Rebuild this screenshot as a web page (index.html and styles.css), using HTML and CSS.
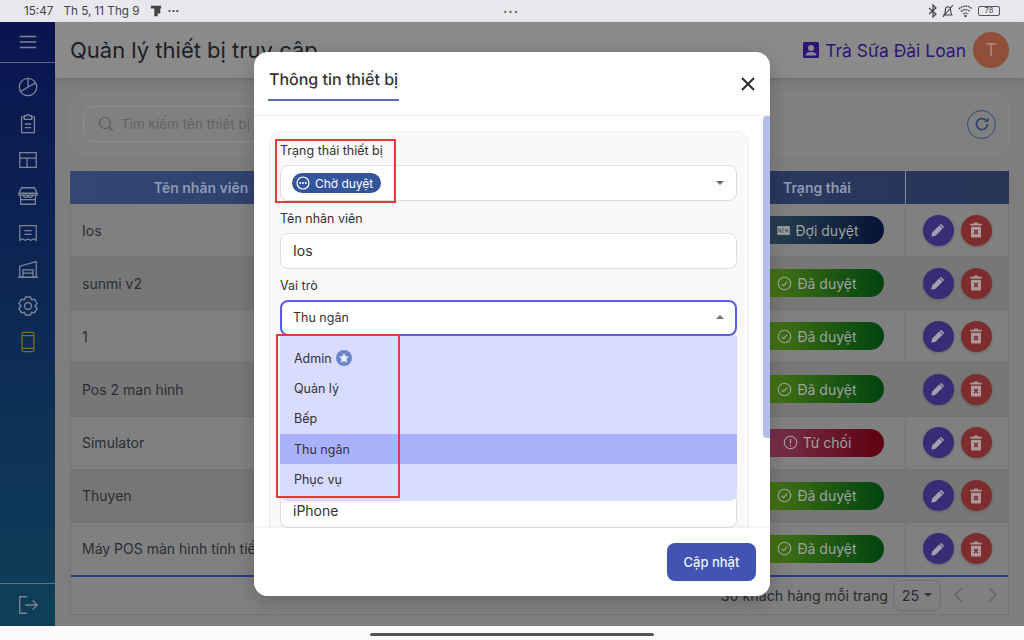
FILE: index.html
```html
<!DOCTYPE html>
<html lang="vi">
<head>
    <meta charset="UTF-8">
    <meta name="viewport" content="width=device-width, initial-scale=1.0">
    <title>Quản lý thiết bị truy cập</title>
    <link rel="stylesheet" href="styles.css">
</head>
<body>
    <svg class="sprite" aria-hidden="true">
        <symbol id="i_ok" viewBox="0 0 24 24"><circle cx="12" cy="12" r="10" fill="none" stroke="currentColor" stroke-width="1.8"/><path d="M7.5 12.5l3 3 6-6.5" fill="none" stroke="currentColor" stroke-width="1.8"/></symbol>
        <symbol id="i_no" viewBox="0 0 24 24"><circle cx="12" cy="12" r="10" fill="none" stroke="currentColor" stroke-width="1.8"/><path d="M12 6.5v7M12 16v2" fill="none" stroke="currentColor" stroke-width="2"/></symbol>
        <symbol id="i_new" viewBox="0 0 24 24"><path d="M2 5h20v14H2z" fill="currentColor"/><path d="M4.5 15V9l3 6V9M10 9v6M10 9h3M10 12h2.500M10 15h3M14.500 9l1.300 6 1.400-5 1.300 5 1.300-6" fill="none" stroke="#3b5468" stroke-width="1.100"/></symbol>
        <symbol id="i_edit" viewBox="0 0 24 24"><path d="M4 20l1-5L15.500 4.500l4 4L9 19z" fill="currentColor"/><path d="M13.800 6.200l4 4" stroke="#372c75" stroke-width="1.200"/></symbol>
        <symbol id="i_trash" viewBox="0 0 24 24"><path d="M6 8h12v13H6zM5 4.500h4l1-1.500h4l1 1.500h4V6.500H5z" fill="currentColor"/><path d="M9.800 12l4.400 4.800M14.200 12l-4.400 4.800" stroke="#7d2b2b" stroke-width="1.800"/></symbol>
    </svg>

    <div class="statusbar">
        <div class="status_left">
            <span class="time">15:47</span>
            <span>Th 5, 11 Thg 9</span>
            <svg class="status_news" viewBox="0 0 14 14"><path d="M1 1h12v3h-1v6H9v3H5V4H1z" fill="#444"/></svg>
            <span class="status_dots">···</span>
        </div>
        <div class="status_center">···</div>
        <div class="status_right">
            <svg width="10" height="14" viewBox="0 0 10 14"><path d="M1 4l7 6-3 3V1l3 3-7 6" fill="none" stroke="#444" stroke-width="1.200"/></svg>
            <svg width="14" height="14" viewBox="0 0 14 14"><path d="M2 11h9.500M3.500 11c1-2 .5-4 1-6 .5-3 4.500-3 5 0 .4 2 .3 4 1 6M2 13L12 1" fill="none" stroke="#444" stroke-width="1.100"/></svg>
            <svg width="15" height="14" viewBox="0 0 15 14"><path d="M1 5c4-4 9-4 13 0M3 7.500c3-2.600 6-2.600 9 0M5 10c1.700-1.400 3.300-1.400 5 0" fill="none" stroke="#444" stroke-width="1.300" stroke-dasharray="1.800 .6"/><circle cx="7.500" cy="12" r="1.200" fill="#444"/></svg>
            <span class="battery">78</span>
        </div>
    </div>

    <div class="app">
        <aside class="sidebar">
            <div class="side_top">
                <svg class="side_icon" viewBox="0 0 24 24"><path d="M3 6h18M3 12h18M3 18h18"/></svg>
            </div>
            <nav class="side_nav">
                <a class="side_item"><svg class="side_icon" viewBox="0 0 24 24"><circle cx="12" cy="12" r="9.500"/><path d="M12 12L4 17M12 12V2.500M12 12l8.500-4.500"/></svg></a>
                <a class="side_item"><svg class="side_icon" viewBox="0 0 24 24"><path d="M8 4.500H5v17h14v-17h-3M8 3h2.500a1.500 1.500 0 0 1 3 0H16v4H8zM8.500 12h7M8.500 16h7"/></svg></a>
                <a class="side_item"><svg class="side_icon" viewBox="0 0 24 24"><path d="M3 4h18v16H3zM3 10h18M11 10v10"/></svg></a>
                <a class="side_item"><svg class="side_icon" viewBox="0 0 24 24"><path d="M5 3h14l3 6v2H2V9zM4 11v10h16V11M2 9h20M7 11a2.500 2.500 0 0 0 5 0 2.500 2.500 0 0 0 5 0M4 16h16"/></svg></a>
                <a class="side_item"><svg class="side_icon" viewBox="0 0 24 24"><path d="M3 4h18v16l-3-1.500-3 1.500-3-1.500L9 20l-3-1.500L3 20zM8 9.500h8M8 13.500h8"/></svg></a>
                <a class="side_item"><svg class="side_icon" viewBox="0 0 24 24"><path d="M1 21h22M3 21V9L21 4v17M6.500 21v-8h11v8M6.500 16.500h11"/></svg></a>
                <a class="side_item"><svg class="side_icon wide" viewBox="0 0 24 24"><path d="M9.500 3h5l1 2.800 3-.6 2.500 4.300-2 2.500 2 2.500-2.500 4.300-3-.6-1 2.800h-5l-1-2.800-3 .6L3 14.500 5 12 3 9.500l2.500-4.300 3 .6z"/><circle cx="12" cy="12" r="3.500"/></svg></a>
                <a class="side_item active"><svg class="side_icon" viewBox="0 0 24 24"><rect x="5.500" y="1.500" width="13" height="21" rx="2"/><path d="M5.500 5h13M5.500 19h13"/></svg></a>
            </nav>
            <div class="side_bottom">
                <svg class="side_icon" viewBox="0 0 24 24"><path d="M11 3H3v18h8M9 12h13M17 7l5 5-5 5"/></svg>
            </div>
        </aside>

        <main class="main">
            <header class="topbar">
                <h1 class="page_title">Quản lý thiết bị truy cập</h1>
                <div class="account">
                    <svg class="account_icon" viewBox="0 0 16 16"><path d="M0 1.500A1.500 1.500 0 0 1 1.500 0h13A1.500 1.500 0 0 1 16 1.500v13a1.500 1.500 0 0 1-1.500 1.500h-13A1.500 1.500 0 0 1 0 14.500z" fill="#2d1577"/><circle cx="8" cy="6" r="3" fill="#8a8a8a"/><path d="M2.500 13.500c.5-3 3-3.500 5.500-3.500s5 .5 5.500 3.500z" fill="#8a8a8a"/></svg>
                    <span class="account_name">Trà Sữa Đài Loan</span>
                    <span class="avatar">T</span>
                </div>
            </header>

            <div class="content">
                <section class="search_card">
                    <div class="search_input">
                        <svg width="16" height="16" viewBox="0 0 16 16"><circle cx="7" cy="7" r="5.500" fill="none" stroke="#5c5c5c" stroke-width="1.200"/><path d="M11 11l4 4" stroke="#5c5c5c" stroke-width="1.200"/></svg>
                        <span>Tìm kiếm tên thiết bị</span>
                    </div>
                    <button class="refresh">
                        <svg width="16" height="16" viewBox="0 0 16 16"><path d="M13.500 8a5.500 5.500 0 1 1-1.800-4" fill="none" stroke="#2f4170" stroke-width="1.800"/><path d="M14.500 1.500v4.500H10z" fill="#2f4170"/></svg>
                    </button>
                </section>

                <section class="table">
                    <div class="row head">
                        <div class="cell">Tên nhân viên</div>
                        <div class="cell"></div>
                        <div class="cell">Trạng thái</div>
                        <div class="cell"></div>
                    </div>
                    <div class="row">
                        <div class="cell name">Ios</div><div class="cell"></div>
                        <div class="cell"><span class="pill wait"><svg><use href="#i_new"/></svg>Đợi duyệt</span></div>
                        <div class="cell actions"><button class="round edit"><svg><use href="#i_edit"/></svg></button><button class="round del"><svg><use href="#i_trash"/></svg></button></div>
                    </div>
                    <div class="row">
                        <div class="cell name">sunmi v2</div><div class="cell"></div>
                        <div class="cell"><span class="pill ok"><svg><use href="#i_ok"/></svg>Đã duyệt</span></div>
                        <div class="cell actions"><button class="round edit"><svg><use href="#i_edit"/></svg></button><button class="round del"><svg><use href="#i_trash"/></svg></button></div>
                    </div>
                    <div class="row">
                        <div class="cell name">1</div><div class="cell"></div>
                        <div class="cell"><span class="pill ok"><svg><use href="#i_ok"/></svg>Đã duyệt</span></div>
                        <div class="cell actions"><button class="round edit"><svg><use href="#i_edit"/></svg></button><button class="round del"><svg><use href="#i_trash"/></svg></button></div>
                    </div>
                    <div class="row">
                        <div class="cell name">Pos 2 man hinh</div><div class="cell"></div>
                        <div class="cell"><span class="pill ok"><svg><use href="#i_ok"/></svg>Đã duyệt</span></div>
                        <div class="cell actions"><button class="round edit"><svg><use href="#i_edit"/></svg></button><button class="round del"><svg><use href="#i_trash"/></svg></button></div>
                    </div>
                    <div class="row">
                        <div class="cell name">Simulator</div><div class="cell"></div>
                        <div class="cell"><span class="pill no"><svg><use href="#i_no"/></svg>Từ chối</span></div>
                        <div class="cell actions"><button class="round edit"><svg><use href="#i_edit"/></svg></button><button class="round del"><svg><use href="#i_trash"/></svg></button></div>
                    </div>
                    <div class="row">
                        <div class="cell name">Thuyen</div><div class="cell"></div>
                        <div class="cell"><span class="pill ok"><svg><use href="#i_ok"/></svg>Đã duyệt</span></div>
                        <div class="cell actions"><button class="round edit"><svg><use href="#i_edit"/></svg></button><button class="round del"><svg><use href="#i_trash"/></svg></button></div>
                    </div>
                    <div class="row">
                        <div class="cell name">Máy POS màn hình tính tiền</div><div class="cell"></div>
                        <div class="cell"><span class="pill ok"><svg><use href="#i_ok"/></svg>Đã duyệt</span></div>
                        <div class="cell actions"><button class="round edit"><svg><use href="#i_edit"/></svg></button><button class="round del"><svg><use href="#i_trash"/></svg></button></div>
                    </div>
                    <div class="table_footer">
                        <span>30 khách hàng mỗi trang</span>
                        <span class="page_size">25<i class="caret small"></i></span>
                        <svg class="page_arrow" viewBox="0 0 16 16"><path d="M11 1L4 8l7 7"/></svg>
                        <svg class="page_arrow" viewBox="0 0 16 16"><path d="M5 1l7 7-7 7"/></svg>
                    </div>
                </section>
            </div>
        </main>

        <div class="scrim">
            <div class="modal">
                <div class="modal_head">
                    <h2 class="modal_title">Thông tin thiết bị</h2>
                    <svg class="modal_close" viewBox="0 0 14 14"><path d="M1 1l12 12M13 1L1 13"/></svg>
                </div>
                <div class="modal_body">
                    <div class="form_card">
                        <div class="field">
                            <label>Trạng thái thiết bị</label>
                            <div class="select">
                                <span class="chip">
                                    <svg width="14" height="14" viewBox="0 0 14 14"><circle cx="7" cy="7" r="6" fill="none" stroke="#fff" stroke-width="1.200"/><circle cx="4.300" cy="7" r="1" fill="#fff"/><circle cx="7" cy="7" r="1" fill="#fff"/><circle cx="9.700" cy="7" r="1" fill="#fff"/></svg>
                                    Chờ duyệt
                                </span>
                                <i class="caret"></i>
                            </div>
                        </div>
                        <div class="field">
                            <label>Tên nhân viên</label>
                            <div class="input">Ios</div>
                        </div>
                        <div class="field has_menu">
                            <label>Vai trò</label>
                            <div class="select focused">
                                <span class="select_value">Thu ngân</span>
                                <i class="caret up"></i>
                            </div>
                            <ul class="menu">
                                <li>Admin
                                    <svg width="16" height="16" viewBox="0 0 16 16"><circle cx="8" cy="8" r="8" fill="#6a86c8"/><path d="M8 3l1.500 3.300 3.500.4-2.600 2.400.7 3.500L8 10.900l-3.100 1.700.7-3.500L3 6.700l3.500-.4z" fill="#e8ecff"/></svg>
                                </li>
                                <li>Quản lý</li>
                                <li>Bếp</li>
                                <li class="selected">Thu ngân</li>
                                <li>Phục vụ</li>
                            </ul>
                        </div>
                        <div class="input last_input">iPhone</div>
                    </div>
                    <div class="scroll_thumb"></div>
                </div>
                <div class="modal_foot">
                    <button class="btn_save">Cập nhật</button>
                </div>
                <div class="mark mark_status"></div>
                <div class="mark mark_roles"></div>
            </div>
        </div>
    </div>

    <div class="homebar"><span></span></div>
</body>
</html>
```

FILE: styles.css
```css
* {
    box-sizing: border-box;
}

html,
body {
    margin: 0;
    padding: 0;
    font-family: Inter, "Noto Sans", sans-serif;
    background-color: #fbfbfb;
}

body {
    width: 1024px;
    height: 640px;
    display: flex;
    flex-direction: column;
    overflow: hidden;
}

.sprite {
    display: none;
}

/* tablet status bar */

.statusbar {
    height: 22px;
    flex: none;
    display: flex;
    align-items: center;
    justify-content: space-between;
    padding: 0 24px;
    background-color: #e9e8ef;
    color: #444;
    font-size: 11.700px;
    position: relative;
}

.status_left {
    display: flex;
    align-items: center;
    gap: 10px;
}

.status_news {
    width: 12px;
    height: 12px;
}

.status_dots {
    font-weight: 700;
    margin-left: -4px;
}

.status_center {
    position: absolute;
    left: 503px;
    top: 3px;
    font-size: 13px;
    font-weight: 700;
    letter-spacing: 1px;
    color: #666;
}

.status_right {
    display: flex;
    align-items: center;
    gap: 3px;
}

.battery {
    width: 22px;
    height: 10px;
    margin-left: 2px;
    border: 1px solid #555;
    border-radius: 2px;
    font-size: 7.500px;
    line-height: 8px;
    text-align: center;
}

/* app shell, colours already include the dimming of the modal backdrop */

.app {
    height: 604px;
    flex: none;
    display: flex;
    position: relative;
}

.sidebar {
    width: 55px;
    flex: none;
    display: flex;
    flex-direction: column;
    background-image: linear-gradient(to bottom, #0a1450, #0f3f58);
}

.side_top {
    height: 41px;
    flex: none;
    display: flex;
    align-items: center;
    justify-content: center;
    border-bottom: 1px solid #5c6488;
}

.side_nav {
    flex: 1;
    padding-top: 6px;
}

.side_item {
    height: 36.400px;
    display: flex;
    align-items: center;
    justify-content: center;
}

.side_icon {
    width: 22px;
    height: 22px;
    fill: none;
    stroke: #7f8495;
    stroke-width: 1.400;
}

.side_item.active .side_icon {
    stroke: #78731c;
}

.side_icon.wide {
    width: 24px;
    height: 24px;
}

.side_bottom {
    height: 43px;
    flex: none;
    display: flex;
    align-items: center;
    justify-content: center;
    border-top: 1px solid #5a7282;
}

.main {
    flex: 1;
    min-width: 0;
    display: flex;
    flex-direction: column;
    background-color: #7e7e7e;
}

.topbar {
    height: 56px;
    flex: none;
    display: flex;
    align-items: center;
    justify-content: space-between;
    padding: 0 15px;
    background-color: #8a8a8a;
    box-shadow: 0 2px 5px rgba(0, 0, 0, 0.12);
}

.page_title {
    margin: 0;
    font-size: 22px;
    font-weight: 400;
    color: #1c1f26;
}

.account {
    display: flex;
    align-items: center;
}

.account_icon {
    width: 16px;
    height: 16px;
    margin-right: 6px;
}

.account_name {
    font-size: 17.500px;
    color: #2d1577;
    margin-right: 7px;
}

.avatar {
    width: 36px;
    height: 36px;
    border-radius: 50%;
    background-color: #8f4d3a;
    color: #b08a7d;
    font-size: 17px;
    display: flex;
    align-items: center;
    justify-content: center;
}

.content {
    flex: 1;
    padding: 14px 14px 11px;
    display: flex;
    flex-direction: column;
}

.search_card {
    height: 64px;
    flex: none;
    margin-bottom: 15px;
    padding: 0 13px;
    display: flex;
    align-items: center;
    justify-content: space-between;
    background-color: #808080;
    border: 1px solid #868686;
    border-radius: 16px;
}

.search_input {
    width: 640px;
    height: 36px;
    display: flex;
    align-items: center;
    gap: 7px;
    padding-left: 14px;
    border: 1px solid #8f8f8f;
    border-radius: 9px;
    color: #636363;
    font-size: 13.500px;
}

.refresh {
    width: 29px;
    height: 29px;
    padding: 0;
    display: flex;
    align-items: center;
    justify-content: center;
    background: none;
    border: 1px solid #364a7a;
    border-radius: 50%;
}

.table {
    flex: 1;
    margin: 0 1px;
    display: flex;
    flex-direction: column;
    background-color: #808080;
    border: 1px solid #747474;
    border-top: 0;
}

.row {
    height: 53.140px;
    flex: none;
    display: grid;
    grid-template-columns: 261px 397px 176px 1fr;
    border-bottom: 1px solid #747474;
}

.row:nth-child(odd) {
    background-color: #777;
}

.row.head {
    height: 33px;
    margin: 0 -1px;
    grid-template-columns: 262px 397px 176px 1fr;
    background-image: linear-gradient(to right, #334674, #263456);
    color: #8e99b3;
    font-size: 14px;
    font-weight: 600;
    text-align: center;
    border-bottom: 0;
}

.cell {
    display: flex;
    align-items: center;
    justify-content: center;
    min-width: 0;
}

.cell:last-child {
    border-left: 1px solid #747474;
}

.head .cell:last-child {
    border-left-color: #7f8aa5;
}

.cell.name {
    justify-content: flex-start;
    padding-left: 11px;
    color: #2b2d33;
    font-size: 14px;
    white-space: nowrap;
}

.pill {
    width: 134px;
    height: 28px;
    display: flex;
    align-items: center;
    justify-content: center;
    gap: 5px;
    border-radius: 14px;
    color: #a0a2a2;
    font-size: 14px;
}

.pill svg {
    width: 15px;
    height: 15px;
}

.pill.ok {
    background-image: linear-gradient(to right, #527a16, #004310);
}

.pill.wait {
    background-image: linear-gradient(to right, #2f4654, #031434);
}

.pill.no {
    background-image: linear-gradient(to right, #7c3957, #5e000f);
}

.actions {
    gap: 7px;
}

.round {
    width: 31px;
    height: 31px;
    padding: 0;
    border: 0;
    border-radius: 50%;
    display: flex;
    align-items: center;
    justify-content: center;
    color: #a0a0b0;
    box-shadow: 0 1px 3px rgba(0, 0, 0, 0.2);
}

.round svg {
    width: 20px;
    height: 20px;
}

.round.edit {
    background-color: #372c75;
}

.round.del {
    background-color: #7d2d2d;
    color: #ad9898;
}

.table_footer {
    flex: 1;
    display: flex;
    align-items: center;
    justify-content: flex-end;
    border-top: 2px solid #2a3880;
    margin-top: -1px;
    color: #2b2b2e;
    font-size: 14.200px;
}

.page_size {
    width: 48px;
    height: 31px;
    margin: 0 1px 0 5px;
    display: flex;
    align-items: center;
    justify-content: center;
    gap: 5px;
    border: 1px solid #6f6f6f;
    border-radius: 8px;
}

.page_arrow {
    width: 16px;
    height: 16px;
    margin-left: 9px;
    margin-right: 8px;
    fill: none;
    stroke: #646464;
    stroke-width: 1.300;
}

.caret {
    width: 0;
    height: 0;
    border-left: 4px solid transparent;
    border-right: 4px solid transparent;
    border-top: 4px solid #6d6d6d;
}

.caret.small {
    border-top-color: #3a3a3a;
}

.caret.up {
    border-top: 0;
    border-bottom: 4px solid #6d6d6d;
}

/* modal */

.scrim {
    position: absolute;
    top: 0;
    right: 0;
    bottom: 0;
    left: 0;
    display: flex;
    align-items: center;
    justify-content: center;
}

.modal {
    width: 516px;
    height: 544px;
    position: relative;
    display: flex;
    flex-direction: column;
    background-color: #fff;
    border-radius: 14px;
    overflow: hidden;
    box-shadow: 0 6px 20px rgba(0, 0, 0, 0.2);
}

.modal_head {
    height: 64px;
    flex: none;
    display: flex;
    align-items: flex-start;
    justify-content: space-between;
    padding: 16px 15px 0 14px;
    border-bottom: 1px solid #f1f1f1;
}

.modal_title {
    margin: 0;
    padding: 0 1px 8px 1px;
    width: 131px;
    white-space: nowrap;
    border-bottom: 2px solid #5b6bbf;
    color: #333;
    font-size: 16px;
    line-height: 23px;
    font-weight: 500;
    text-rendering: geometricPrecision;
}

.modal_close {
    width: 14px;
    height: 14px;
    margin: 9px 0 0 0;
    fill: none;
    stroke: #2a2a2a;
    stroke-width: 2;
}

.modal_body {
    flex: 1;
    min-height: 0;
    position: relative;
    padding: 15px 21px 0 15px;
    overflow: hidden;
}

.form_card {
    height: 500px;
    padding: 11px 11px 11px 10px;
    background-color: #f9f9f9;
    border: 1px solid #eee;
    border-radius: 12px;
}

.field {
    margin-bottom: 9.500px;
}

.field label {
    display: block;
    margin-bottom: 6px;
    color: #333;
    font-size: 12.500px;
    line-height: 16px;
}

.select,
.input {
    height: 36px;
    display: flex;
    align-items: center;
    justify-content: space-between;
    padding: 0 12px;
    background-color: #fff;
    border: 1px solid #dedede;
    border-radius: 8px;
    color: #333;
}

.input {
    font-size: 14px;
}

.select_value {
    font-size: 12.500px;
}

.select.focused {
    padding: 0 11px 2px;
    border: 2px solid #5b5bf0;
}

.chip {
    height: 20px;
    margin-left: -1px;
    display: flex;
    align-items: center;
    gap: 5px;
    padding: 0 8px 0 4px;
    background-color: #34549b;
    border-radius: 10px;
    color: #fff;
    font-size: 12px;
}

.has_menu {
    position: relative;
    margin-bottom: 0;
}

.menu {
    position: absolute;
    top: 100%;
    left: 0;
    right: 0;
    height: 165px;
    margin: 0;
    padding: 7px 0 0;
    list-style: none;
    background-color: #d9dbff;
    border-radius: 0 0 8px 8px;
    z-index: 2;
}

.menu li {
    height: 30.300px;
    display: flex;
    align-items: center;
    gap: 4px;
    padding-left: 14px;
    color: #333;
    font-size: 12.500px;
}

.menu li.selected {
    background-color: #a9b2fb;
}

.last_input {
    margin-top: 156px;
}

.scroll_thumb {
    position: absolute;
    top: 0;
    right: 0;
    width: 7px;
    height: 322px;
    background-color: #b3bfeb;
    border-radius: 4px 0 0 4px;
}

.modal_foot {
    height: 68px;
    flex: none;
    display: flex;
    align-items: center;
    justify-content: flex-end;
    padding-right: 14px;
    background-color: #fff;
    box-shadow: 0 -1px 4px rgba(0, 0, 0, 0.06);
    position: relative;
}

.btn_save {
    width: 89px;
    height: 38px;
    background-color: #4353b3;
    border: 0;
    border-radius: 8px;
    color: #f0f0f8;
    font-family: inherit;
    font-size: 13px;
    font-weight: 500;
}

/* red annotation boxes drawn on top of the screenshot */

.mark {
    position: absolute;
    border: 2px solid #e53a3a;
    z-index: 3;
}

.mark_status {
    left: 21px;
    top: 87px;
    width: 121px;
    height: 64px;
}

.mark_roles {
    left: 22px;
    top: 282px;
    width: 124px;
    height: 164px;
}

.homebar {
    flex: 1;
    display: flex;
    align-items: center;
    justify-content: center;
    padding-top: 2px;
}

.homebar span {
    width: 284px;
    height: 3px;
    background-color: #555;
    border-radius: 2px;
}
```
